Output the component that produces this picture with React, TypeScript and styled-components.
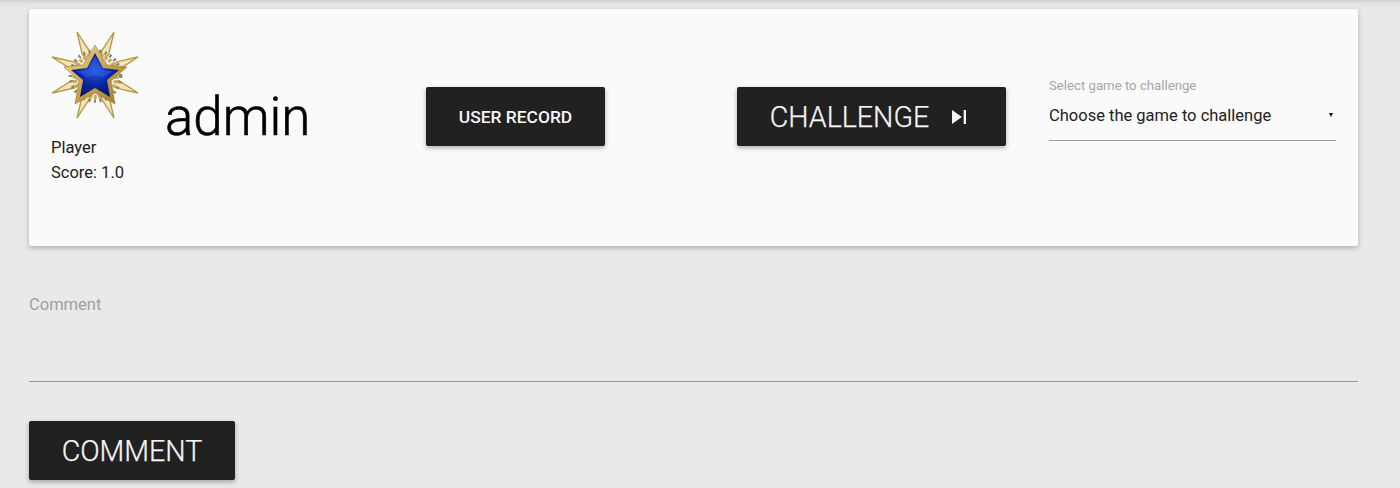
import styled, { createGlobalStyle } from 'styled-components';

const GlobalStyle = createGlobalStyle`
  html, body {
    margin: 0;
    height: 488px;
    overflow: hidden;
    background: #e9e9e9;
    font-family: Roboto, "Liberation Sans", sans-serif;
  }
`;

const Page = styled.div`
  display: flex;
  flex-direction: column;
  height: 488px;
  padding: 9px 42px 0 29px;
  box-sizing: border-box;
  background: linear-gradient(#cfcfcf 0, #e0e0e0 3px, #e7e7e7 6px, #e9e9e9 9px);
`;

const ProfileCard = styled.section`
  display: flex;
  align-items: flex-start;
  height: 237px;
  padding: 22px 22px 0;
  box-sizing: border-box;
  background: #fafafa;
  border-radius: 2px;
  box-shadow: 0 2px 5px rgba(0, 0, 0, 0.26);
`;

const PlayerColumn = styled.div`
  display: flex;
  flex-direction: column;
  flex: 0 0 114px;
  color: #212121;
  font-size: 16.5px;
  line-height: 25px;
`;

const Badge = styled.svg`
  display: block;
  width: 88px;
  height: 88px;
  margin-bottom: 16px;
  filter: blur(0.3px);
`;

const UserName = styled.h1`
  flex: 0 0 261px;
  margin: 52px 0 0;
  color: #000;
  font-size: 52.8px;
  font-weight: 300;
  line-height: 68px;
  -webkit-text-stroke: 0.6px #000;
`;

const ActionButton = styled.button<{ $large?: boolean }>`
  display: inline-flex;
  align-items: center;
  justify-content: center;
  gap: 16px;
  height: 59px;
  padding: 0;
  border: 0;
  border-radius: 2px;
  background: #212121;
  color: #f5f5f5;
  font-family: inherit;
  font-size: ${(p) => (p.$large ? '28.6px' : '17.4px')};
  font-weight: ${(p) => (p.$large ? 300 : 500)};
  -webkit-text-stroke: ${(p) => (p.$large ? '0.25px #f5f5f5' : '0')};
  box-shadow: 0 2px 5px rgba(0, 0, 0, 0.3);
`;

const RecordButton = styled(ActionButton)`
  flex: 0 0 179px;
  margin: 56px 132px 0 0;
`;

const ChallengeButton = styled(ActionButton)`
  flex: 0 0 269px;
  margin: 56px 43px 0 0;
`;

const CommentButton = styled(ActionButton)`
  align-self: flex-start;
  width: 206px;
  margin-top: 39px;
`;

const SelectField = styled.div`
  flex: 0 0 287px;
  margin-top: 47px;
`;

const SelectLabel = styled.div`
  color: #a6a6a6;
  font-size: 13.2px;
  line-height: 16px;
`;

const SelectValue = styled.div`
  display: flex;
  align-items: center;
  justify-content: space-between;
  height: 46px;
  padding: 0 3px 5px 0;
  box-sizing: border-box;
  margin-top: 1px;
  color: #212121;
  font-size: 16.5px;
  border-bottom: 1px solid #a0a0a0;
`;

const Caret = styled.span`
  width: 0;
  height: 0;
  border-left: 2.5px solid transparent;
  border-right: 2.5px solid transparent;
  border-top: 4px solid #111;
`;

const CommentField = styled.div`
  height: 86px;
  margin-top: 49px;
  border-bottom: 1px solid #999;
  color: #a0a0a0;
  font-size: 16.5px;
  line-height: 20px;
`;

const CENTER = { x: 44.5, y: 44 };
const SPIKE_TIPS = [
  [26, 1],
  [63, 1],
  [87, 26],
  [87, 62],
  [63, 87],
  [26, 87],
  [1, 62],
  [1, 26],
];

// kite from the tip back to the ring, `w` wide at radius `r`
const spikePoints = (tx: number, ty: number, r: number, w: number) => {
  const dx = tx - CENTER.x;
  const dy = ty - CENTER.y;
  const len = Math.hypot(dx, dy);
  const ux = dx / len;
  const uy = dy / len;
  const bx = CENTER.x + ux * r;
  const by = CENTER.y + uy * r;
  return [
    `${tx},${ty}`,
    `${bx - uy * w},${by + ux * w}`,
    `${CENTER.x + ux * (r - 6)},${CENTER.y + uy * (r - 6)}`,
    `${bx + uy * w},${by - ux * w}`,
  ].join(' ');
};

const MedalBadge = () => (
  <Badge viewBox="0 0 88 88">
    <defs>
      <linearGradient id="gold" x1="0" y1="0" x2="1" y2="1">
        <stop offset="0" stopColor="#f3dfa0" />
        <stop offset="0.5" stopColor="#c9a44e" />
        <stop offset="1" stopColor="#9c7a30" />
      </linearGradient>
      <radialGradient id="blue" cx="0.5" cy="0.4" r="0.6">
        <stop offset="0" stopColor="#2458de" />
        <stop offset="0.55" stopColor="#0a26a4" />
        <stop offset="1" stopColor="#04166a" />
      </radialGradient>
    </defs>
    {SPIKE_TIPS.map(([tx, ty]) => (
      <polygon
        key={`${tx}-${ty}`}
        points={spikePoints(tx, ty, 24, 4)}
        fill="#f0e4bd"
        stroke="#b8953f"
        strokeWidth="1.3"
        strokeLinejoin="miter"
      />
    ))}
    <circle cx="44.5" cy="45" r="25" fill="none" stroke="#8f805a" strokeWidth="3.5" strokeDasharray="2 3.5" />
    <circle cx="44.5" cy="45" r="21" fill="#f2ecd8" stroke="#c4a968" strokeWidth="4" strokeDasharray="3 1.5" />
    <path
      d="M44 14 L56 34 L76 36 L60 50 L64 73 L44 62 L24 73 L28 50 L13 36 L32 34 Z"
      fill="url(#gold)"
      stroke="#8d6f2e"
      strokeWidth="0.5"
      strokeLinejoin="round"
    />
    <path
      d="M44 22 L52 37 L68 39 L56 49 L59 66 L44 57 L29 66 L32 49 L20 39 L36 37 Z"
      fill="url(#blue)"
    />
    <path d="M44 25 L50.5 38.5 L62 40.5 L52 46 Q44 43 36 46 L26 40.5 L37.5 38.5 Z" fill="#3468ec" opacity="0.5" />
  </Badge>
);

const SkipIcon = () => (
  <svg width="28" height="28" viewBox="0 0 24 24" fill="currentColor">
    <path d="M6 18l8.5-6L6 6v12zM16 6v12h2V6h-2z" />
  </svg>
);

export default function App() {
  return (
    <>
      <GlobalStyle />
      <Page>
        <ProfileCard>
          <PlayerColumn>
            <MedalBadge />
            <span>Player</span>
            <span>Score: 1.0</span>
          </PlayerColumn>
          <UserName>admin</UserName>
          <RecordButton>USER RECORD</RecordButton>
          <ChallengeButton $large>
            CHALLENGE
            <SkipIcon />
          </ChallengeButton>
          <SelectField>
            <SelectLabel>Select game to challenge</SelectLabel>
            <SelectValue>
              Choose the game to challenge
              <Caret />
            </SelectValue>
          </SelectField>
        </ProfileCard>
        <CommentField>Comment</CommentField>
        <CommentButton $large>COMMENT</CommentButton>
      </Page>
    </>
  );
}
